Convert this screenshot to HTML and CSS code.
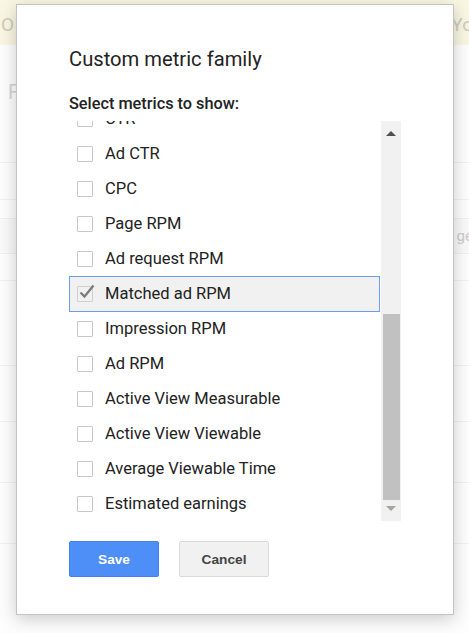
FILE: index.html
```html
<!DOCTYPE html>
<html>
<head>
<meta charset="utf-8">
<link rel="stylesheet" href="styles.css">
</head>
<body>
<div class="page">
  <div class="band"><span class="bg-left">O</span><span class="bg-right">Yo</span></div>
  <div class="bg-head"><span class="bg-f">F</span></div>
  <div class="bg-row r1"></div>
  <div class="bg-row r2"></div>
  <div class="bg-row r3"><span class="bg-ge">ge</span></div>
  <div class="bg-row r4"></div>
  <div class="bg-row r5"></div>
  <div class="bg-row r6"></div>
  <div class="bg-row r7"></div>
  <div class="bg-row r8"></div>
</div>

<div class="dialog">
  <h1 class="title">Custom metric family</h1>
  <div class="subtitle">Select metrics to show:</div>
  <div class="listbox">
    <div class="list">
      <div class="items">
        <div class="row"><span class="cb"></span><span class="lbl">CTR</span></div>
        <div class="row"><span class="cb"></span><span class="lbl">Ad CTR</span></div>
        <div class="row"><span class="cb"></span><span class="lbl">CPC</span></div>
        <div class="row"><span class="cb"></span><span class="lbl">Page RPM</span></div>
        <div class="row"><span class="cb"></span><span class="lbl">Ad request RPM</span></div>
        <div class="row focused"><span class="cb checked"><svg class="check" width="18" height="16" viewBox="0 0 18 16"><path d="M2.5 8.5 L6.5 12.5 L15.5 1.5" fill="none" stroke="#7a7a7a" stroke-width="2.2"/></svg></span><span class="lbl">Matched ad RPM</span></div>
        <div class="row"><span class="cb"></span><span class="lbl">Impression RPM</span></div>
        <div class="row"><span class="cb"></span><span class="lbl">Ad RPM</span></div>
        <div class="row"><span class="cb"></span><span class="lbl">Active View Measurable</span></div>
        <div class="row"><span class="cb"></span><span class="lbl">Active View Viewable</span></div>
        <div class="row"><span class="cb"></span><span class="lbl">Average Viewable Time</span></div>
        <div class="row"><span class="cb"></span><span class="lbl">Estimated earnings</span></div>
      </div>
    </div>
    <div class="scrollbar">
      <div class="arrow up"></div>
      <div class="track-space"></div>
      <div class="thumb"></div>
      <div class="arrow down"></div>
    </div>
  </div>
  <div class="buttons">
    <button class="btn save">Save</button>
    <button class="btn cancel">Cancel</button>
  </div>
</div>
</body>
</html>
```
FILE: styles.css
```css
html, body {
  margin: 0;
  padding: 0;
  background: #fff;
  width: 469px;
  height: 633px;
  overflow: hidden;
  font-family: Roboto, "Liberation Sans", Arial, sans-serif;
}

.page {
  width: 469px;
  height: 633px;
  background: #fdfdfd;
}

.band {
  height: 45px;
  background: #f9f6e2;
  display: flex;
  justify-content: space-between;
  align-items: center;
  color: #cdcbc1;
  font-size: 19px;
}
.bg-left { margin-left: 1px; margin-top: 4px; }
.bg-right { margin-right: -4px; margin-top: 4px; }

.bg-head {
  height: 82px;
  border-bottom: 1px solid #f0f0f0;
  color: #d4d4d4;
  font-size: 20px;
}
.bg-f { display: block; margin: 35px 0 0 8px; }

.bg-row {
  border-bottom: 1px solid #f0f0f0;
}
.r1 { height: 36px; }
.r2 { height: 18px; }
.r3 { height: 34px; background: #f9f9f9; position: relative; }
.bg-ge { position: absolute; right: -4px; top: 8px; color: #cbcbcb; font-size: 15px; }
.r4 { height: 26px; }
.r5 { height: 84px; }
.r6 { height: 55px; }
.r7 { height: 60px; }
.r8 { height: 60px; }

.dialog {
  position: absolute;
  left: 16px;
  top: 4px;
  width: 384px;
  height: 567px;
  padding: 42px 0 0 52px;
  background: #fff;
  border: 1px solid #c4c4c4;
  box-shadow: 0 4px 16px rgba(0, 0, 0, 0.2);
  color: #222;
}

.title {
  margin: 0;
  font-size: 20.2px;
  font-weight: 400;
  line-height: 24px;
  color: #222;
}

.subtitle {
  margin-top: 24px;
  font-size: 16.3px;
  font-weight: 500;
  line-height: 18px;
  color: #222;
}

.listbox {
  margin-top: 8px;
  display: flex;
  width: 332px;
  height: 400px;
}

.list {
  flex: 1;
  overflow: hidden;
  position: relative;
}

.items {
  margin-top: -20px;
}

.row {
  height: 35px;
  display: flex;
  align-items: center;
  box-sizing: border-box;
  padding-left: 8px;
  font-size: 16.5px;
  color: #222;
}

.row.focused {
  background: #f1f1f1;
  border: 1px solid #6d9ef4;
  padding-left: 7px;
  height: 36px;
  margin: -0.5px 0 -0.5px 0;
}

.cb {
  width: 16px;
  height: 16px;
  box-sizing: border-box;
  border: 1px solid #c8c8c8;
  border-radius: 1px;
  background: #fff;
  margin-right: 12px;
  position: relative;
  flex: none;
}
.cb.checked { background: transparent; border-color: #d0d0d0; }
.check {
  position: absolute;
  left: 0px;
  top: -3px;
}

.lbl { white-space: nowrap; }

.scrollbar {
  width: 20px;
  background: #f1f1f1;
  display: flex;
  flex-direction: column;
  margin-left: 1px;
}
.arrow {
  height: 21px;
  position: relative;
  flex: none;
}
.arrow.up::after {
  content: "";
  position: absolute;
  left: 5px;
  top: 10px;
  border-left: 5px solid transparent;
  border-right: 5px solid transparent;
  border-bottom: 5px solid #505050;
}
.arrow.down::after {
  content: "";
  position: absolute;
  left: 5px;
  top: 6px;
  border-left: 5px solid transparent;
  border-right: 5px solid transparent;
  border-top: 5px solid #a8a49c;
}
.track-space { flex: 1; }
.thumb {
  height: 186px;
  margin: 0 1px 0 2px;
  background: #c1c1c1;
  flex: none;
}

.buttons {
  margin-top: 20px;
  display: flex;
  gap: 20px;
}

.btn {
  width: 90px;
  height: 36px;
  box-sizing: border-box;
  border-radius: 2px;
  font-family: "Liberation Sans", Arial, sans-serif;
  font-size: 13.7px;
  font-weight: 700;
  padding: 0;
}
.save {
  background: #4d8ef7;
  border: 1px solid #3f83f3;
  color: #fff;
}
.cancel {
  background: #f1f1f1;
  border: 1px solid #d9d9d9;
  color: #444;
}
```
